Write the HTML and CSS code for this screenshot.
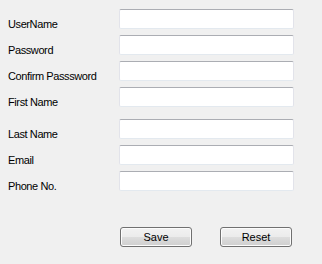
FILE: index.html
```html
<!DOCTYPE html>
<html lang="en">
<head>
    <meta charset="UTF-8">
    <title>Register</title>
    <link rel="stylesheet" href="styles.css">
</head>
<body>
    <form class="reg-form">
        <div class="row">
            <label for="username">UserName</label>
            <input type="text" id="username">
        </div>
        <div class="row">
            <label for="password">Password</label>
            <input type="password" id="password">
        </div>
        <div class="row">
            <label for="confirm">Confirm Passsword</label>
            <input type="password" id="confirm">
        </div>
        <div class="row">
            <label for="firstname">First Name</label>
            <input type="text" id="firstname">
        </div>
        <div class="row spaced">
            <label for="lastname">Last Name</label>
            <input type="text" id="lastname">
        </div>
        <div class="row">
            <label for="email">Email</label>
            <input type="text" id="email">
        </div>
        <div class="row">
            <label for="phone">Phone No.</label>
            <input type="text" id="phone">
        </div>

        <!-- Buttons -->
        <div class="buttons">
            <button type="button">Save</button>
            <button type="button">Reset</button>
        </div>
    </form>
</body>
</html>
```

FILE: styles.css
```css
body {
    margin: 0;
    background: #f0f0f0;
    font-family: 'Liberation Sans', Arial, sans-serif;
    font-size: 11px;
    letter-spacing: -0.4px;
    color: #000;
}
.reg-form {
    padding: 9px 0 0 8px;
    display: flex;
    flex-direction: column;
    gap: 6px;
}
.row {
    display: flex;
    align-items: flex-start;
    height: 20px;
}
.row.spaced {
    margin-top: 6px;
}
.row label {
    width: 111px;
    line-height: 13px;
    padding-top: 9px;
}
.row input {
    box-sizing: border-box;
    width: 175px;
    height: 20px;
    margin: 0;
    padding: 0 3px;
    background: #fff;
    border: 1px solid #e2e3ea;
    border-top-color: #abadb3;
    border-bottom-color: #e3e9ef;
    border-radius: 2px;
    font: inherit;
}
.buttons {
    display: flex;
    gap: 28px;
    margin: 30px 0 0 112px;
}
.buttons button {
    box-sizing: border-box;
    width: 72px;
    height: 20px;
    margin: 0;
    padding: 0;
    border: 1px solid #707070;
    border-radius: 3px;
    background: linear-gradient(#f2f2f2 0%, #ebebeb 50%, #dddddd 51%, #cfcfcf 100%);
    box-shadow: inset 0 0 0 1px #fcfcfc;
    font: inherit;
    color: #000;
}
```
